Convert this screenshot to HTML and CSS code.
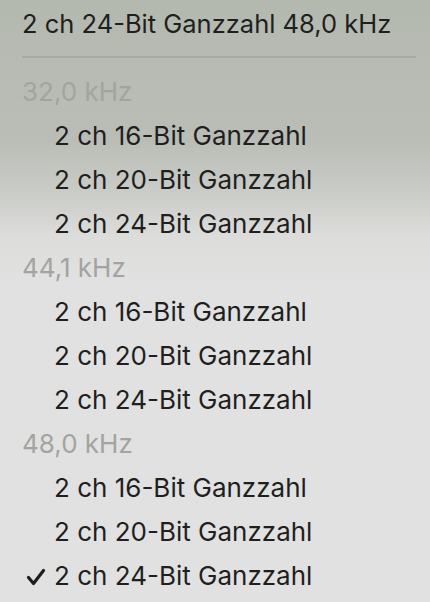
FILE: index.html
```html
<!DOCTYPE html>
<html lang="de">
<head>
    <meta charset="UTF-8">
    <meta name="viewport" content="width=device-width, initial-scale=1.0">
    <title>Format</title>
    <link rel="stylesheet" href="styles.css">
</head>
<body>
    <div class="menu">
        <div class="current">2 ch 24-Bit Ganzzahl 48,0 kHz</div>
        <div class="sep"></div>

        <div class="group">32,0 kHz</div>
        <div class="item">2 ch 16-Bit Ganzzahl</div>
        <div class="item">2 ch 20-Bit Ganzzahl</div>
        <div class="item">2 ch 24-Bit Ganzzahl</div>

        <div class="group">44,1 kHz</div>
        <div class="item">2 ch 16-Bit Ganzzahl</div>
        <div class="item">2 ch 20-Bit Ganzzahl</div>
        <div class="item">2 ch 24-Bit Ganzzahl</div>

        <div class="group">48,0 kHz</div>
        <div class="item">2 ch 16-Bit Ganzzahl</div>
        <div class="item">2 ch 20-Bit Ganzzahl</div>
        <div class="item checked">
            <svg class="check" width="20" height="18" viewBox="0 0 20 18"><path d="M2.5 9.5 L7.5 15.5 L17.5 2.5" fill="none" stroke="#1e1e1e" stroke-width="3.2" stroke-linecap="round" stroke-linejoin="round"/></svg>
            2 ch 24-Bit Ganzzahl
        </div>
    </div>
</body>
</html>
```
FILE: styles.css
```css
html, body { margin: 0; height: 100%; }
body {
    font-family: Inter, "Noto Sans", sans-serif;
    background: linear-gradient(to bottom, #b4b9b0 0px, #babdb6 140px, #c9cbc6 190px, #dcdcda 235px, #e1e1e1 280px, #e1e1e1 100%);
    color: #1f1f1f;
}
.menu { padding: 4px 14px 0 22px; }
.current { font-size: 25.5px; height: 40px; line-height: 40px; }
.sep { height: 2px; background: #a6aaa3; margin: 12px 0 12px 0; }
.group, .item { font-size: 26px; height: 44px; line-height: 44px; }
.group { color: #a2a4a0; }
.item { padding-left: 32px; position: relative; }
.check { position: absolute; left: 4px; top: 14px; }
```
